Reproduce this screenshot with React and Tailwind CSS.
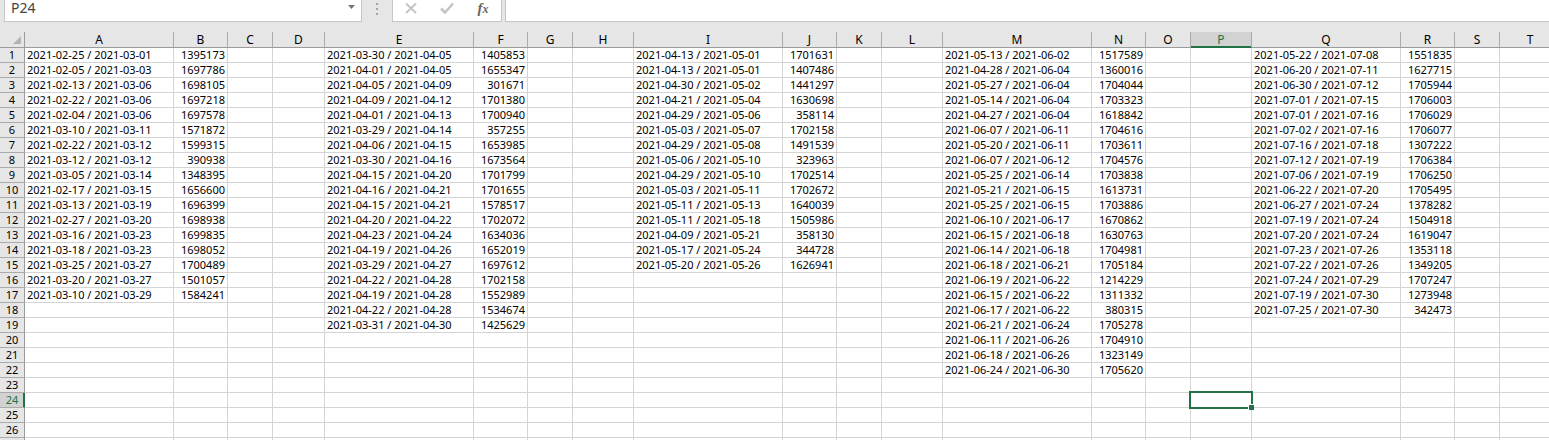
// src/Sheet/App.jsx
import { useState } from "react";

const columns = [
  { id: "A", width: "w-[149px]" },
  { id: "B", width: "w-[54px]" },
  { id: "C", width: "w-[45px]" },
  { id: "D", width: "w-[52px]" },
  { id: "E", width: "w-[149px]" },
  { id: "F", width: "w-[54px]" },
  { id: "G", width: "w-[45px]" },
  { id: "H", width: "w-[61px]" },
  { id: "I", width: "w-[149px]" },
  { id: "J", width: "w-[54px]" },
  { id: "K", width: "w-[45px]" },
  { id: "L", width: "w-[61px]" },
  { id: "M", width: "w-[149px]" },
  { id: "N", width: "w-[54px]" },
  { id: "O", width: "w-[45px]" },
  { id: "P", width: "w-[61px]" },
  { id: "Q", width: "w-[149px]" },
  { id: "R", width: "w-[54px]" },
  { id: "S", width: "w-[45px]" },
  { id: "T", width: "" },
];

// [from, to, number], keyed by the column of the date range
const blocks = {
  A: [
    ["02-25", "03-01", 1395173],
    ["02-05", "03-03", 1697786],
    ["02-13", "03-06", 1698105],
    ["02-22", "03-06", 1697218],
    ["02-04", "03-06", 1697578],
    ["03-10", "03-11", 1571872],
    ["02-22", "03-12", 1599315],
    ["03-12", "03-12", 390938],
    ["03-05", "03-14", 1348395],
    ["02-17", "03-15", 1656600],
    ["03-13", "03-19", 1696399],
    ["02-27", "03-20", 1698938],
    ["03-16", "03-23", 1699835],
    ["03-18", "03-23", 1698052],
    ["03-25", "03-27", 1700489],
    ["03-20", "03-27", 1501057],
    ["03-10", "03-29", 1584241],
  ],
  E: [
    ["03-30", "04-05", 1405853],
    ["04-01", "04-05", 1655347],
    ["04-05", "04-09", 301671],
    ["04-09", "04-12", 1701380],
    ["04-01", "04-13", 1700940],
    ["03-29", "04-14", 357255],
    ["04-06", "04-15", 1653985],
    ["03-30", "04-16", 1673564],
    ["04-15", "04-20", 1701799],
    ["04-16", "04-21", 1701655],
    ["04-15", "04-21", 1578517],
    ["04-20", "04-22", 1702072],
    ["04-23", "04-24", 1634036],
    ["04-19", "04-26", 1652019],
    ["03-29", "04-27", 1697612],
    ["04-22", "04-28", 1702158],
    ["04-19", "04-28", 1552989],
    ["04-22", "04-28", 1534674],
    ["03-31", "04-30", 1425629],
  ],
  I: [
    ["04-13", "05-01", 1701631],
    ["04-13", "05-01", 1407486],
    ["04-30", "05-02", 1441297],
    ["04-21", "05-04", 1630698],
    ["04-29", "05-06", 358114],
    ["05-03", "05-07", 1702158],
    ["04-29", "05-08", 1491539],
    ["05-06", "05-10", 323963],
    ["04-29", "05-10", 1702514],
    ["05-03", "05-11", 1702672],
    ["05-11", "05-13", 1640039],
    ["05-11", "05-18", 1505986],
    ["04-09", "05-21", 358130],
    ["05-17", "05-24", 344728],
    ["05-20", "05-26", 1626941],
  ],
  M: [
    ["05-13", "06-02", 1517589],
    ["04-28", "06-04", 1360016],
    ["05-27", "06-04", 1704044],
    ["05-14", "06-04", 1703323],
    ["04-27", "06-04", 1618842],
    ["06-07", "06-11", 1704616],
    ["05-20", "06-11", 1703611],
    ["06-07", "06-12", 1704576],
    ["05-25", "06-14", 1703838],
    ["05-21", "06-15", 1613731],
    ["05-25", "06-15", 1703886],
    ["06-10", "06-17", 1670862],
    ["06-15", "06-18", 1630763],
    ["06-14", "06-18", 1704981],
    ["06-18", "06-21", 1705184],
    ["06-19", "06-22", 1214229],
    ["06-15", "06-22", 1311332],
    ["06-17", "06-22", 380315],
    ["06-21", "06-24", 1705278],
    ["06-11", "06-26", 1704910],
    ["06-18", "06-26", 1323149],
    ["06-24", "06-30", 1705620],
  ],
  Q: [
    ["05-22", "07-08", 1551835],
    ["06-20", "07-11", 1627715],
    ["06-30", "07-12", 1705944],
    ["07-01", "07-15", 1706003],
    ["07-01", "07-16", 1706029],
    ["07-02", "07-16", 1706077],
    ["07-16", "07-18", 1307222],
    ["07-12", "07-19", 1706384],
    ["07-06", "07-19", 1706250],
    ["06-22", "07-20", 1705495],
    ["06-27", "07-24", 1378282],
    ["07-19", "07-24", 1504918],
    ["07-20", "07-24", 1619047],
    ["07-23", "07-26", 1353118],
    ["07-22", "07-26", 1349205],
    ["07-24", "07-29", 1707247],
    ["07-19", "07-30", 1273948],
    ["07-25", "07-30", 342473],
  ],
};

const numberColumns = { B: "A", F: "E", J: "I", N: "M", R: "Q" };
const rows = Array.from({ length: 26 }, (_, i) => i + 1);

function cellText(col, row) {
  if (blocks[col]) {
    const item = blocks[col][row - 1];
    return item ? `2021-${item[0]} / 2021-${item[1]}` : "";
  }
  const item = blocks[numberColumns[col]]?.[row - 1];
  return item ? String(item[2]) : "";
}

function FormulaBar({ selected }) {
  const [formula, setFormula] = useState("");

  return (
    <div className="flex h-[22px] shrink-0 pl-1">
      {/* Name box */}
      <div className="flex w-[358px] items-start border border-t-0 border-[#c6c6c6] bg-white pr-0.5">
        <input
          aria-label="Name box"
          value={selected}
          readOnly
          className="h-4 min-w-0 flex-1 bg-transparent px-1.5 text-sm leading-4 text-[#444] outline-none"
        />
        <button aria-label="Show names" className="flex h-4 w-4 items-start justify-center pt-[5px]">
          <svg width="7" height="4" viewBox="0 0 7 4" fill="#777">
            <path d="M0 0h7L3.5 4z" />
          </svg>
        </button>
      </div>

      <div className="flex w-[30px] justify-center pt-[3px]">
        <svg width="2" height="12" viewBox="0 0 2 12" fill="#a6a6a6">
          <path d="M0 0h2v2H0zM0 5h2v2H0zM0 10h2v2H0z" />
        </svg>
      </div>

      {/* Cancel, enter and insert function */}
      <div className="flex w-[110px] items-start border border-t-0 border-[#c6c6c6] bg-white">
        <button aria-label="Cancel" className="flex h-4 w-9 items-center justify-center">
          <svg width="12" height="12" viewBox="0 0 12 12" fill="none" stroke="#c4c4c4" strokeWidth="2">
            <path d="M1 1.5l10 9.5M11 1.5L1 11" />
          </svg>
        </button>
        <button aria-label="Enter" className="flex h-4 w-9 items-center justify-center">
          <svg width="14" height="12" viewBox="0 0 14 12" fill="none" stroke="#c4c4c4" strokeWidth="2.6">
            <path d="M1 6.5l4 4L13 1.5" />
          </svg>
        </button>
        <button
          aria-label="Insert function"
          className="flex h-4 w-9 items-center justify-center font-['Liberation_Serif',serif] text-[15px] font-bold italic leading-4 text-[#666]"
        >
          f<span className="pt-0.5 text-xs leading-3">x</span>
        </button>
      </div>

      <input
        aria-label="Formula"
        value={formula}
        onChange={(e) => setFormula(e.target.value)}
        className="ml-[3px] min-w-0 flex-1 border-b border-l border-[#c6c6c6] bg-white px-1.5 text-sm outline-none"
      />
    </div>
  );
}

function App() {
  const [selected, setSelected] = useState({ col: "P", row: 24 });

  return (
    <div className="flex h-screen flex-col gap-2.5 overflow-hidden bg-[#e6e6e6] font-['Noto_Sans',sans-serif] text-black">
      <FormulaBar selected={selected.col + selected.row} />

      <table className="w-full min-w-[1561px] table-fixed border-separate border-spacing-0 text-[11px] leading-[14px]">
        <thead>
          <tr className="h-4 text-xs leading-[15px]">
            <th className="w-[25px] border-b border-r border-[#9b9b9b] p-0 pr-[3px]">
              <svg className="ml-auto" width="8" height="8" viewBox="0 0 8 8" fill="#b4b4b4">
                <path d="M8 0v8H0z" />
              </svg>
            </th>
            {columns.map(({ id, width }) => (
              <th
                key={id}
                scope="col"
                className={`${width} border-b border-r p-0 font-normal ${
                  id === selected.col
                    ? "border-r-[#ababab] border-b-[#217346] bg-[#d2d2d2] text-[#217346] shadow-[inset_0_-1px_#217346]"
                    : "border-r-[#ababab] border-b-[#9b9b9b]"
                }`}
              >
                {id}
              </th>
            ))}
          </tr>
        </thead>
        <tbody>
          {rows.map((row) => (
            <tr key={row} className="h-[15px] bg-white">
              <th
                scope="row"
                className={`border-b border-r border-b-[#ababab] p-0 font-normal ${
                  row === selected.row
                    ? "border-r-[#217346] bg-[#d2d2d2] text-[#217346] shadow-[inset_-1px_0_#217346]"
                    : "border-r-[#9b9b9b] bg-[#e6e6e6]"
                }`}
              >
                {row}
              </th>
              {columns.map(({ id }) => (
                <td
                  key={id}
                  onClick={() => setSelected({ col: id, row })}
                  className={`relative whitespace-nowrap border-b border-r border-[#d4d4d4] px-0.5 py-0 ${
                    numberColumns[id] ? "text-right" : "text-left"
                  }`}
                >
                  {cellText(id, row)}
                  {id === selected.col && row === selected.row && (
                    <span className="absolute -inset-x-0.5 -inset-y-0.5 z-10 border-2 border-[#217346]">
                      <span className="absolute -bottom-[3px] -right-[3px] box-content h-[5px] w-[5px] border-l border-t border-white bg-[#217346]" />
                    </span>
                  )}
                </td>
              ))}
            </tr>
          ))}
        </tbody>
        {/* Grid runs on below the last numbered row */}
        <tfoot>
          <tr className="h-[15px] bg-white">
            <td className="border-r border-[#9b9b9b] bg-[#e6e6e6] p-0" />
            {columns.map(({ id }) => (
              <td key={id} className="border-r border-[#d4d4d4] p-0" />
            ))}
          </tr>
        </tfoot>
      </table>
    </div>
  );
}

export default App;
